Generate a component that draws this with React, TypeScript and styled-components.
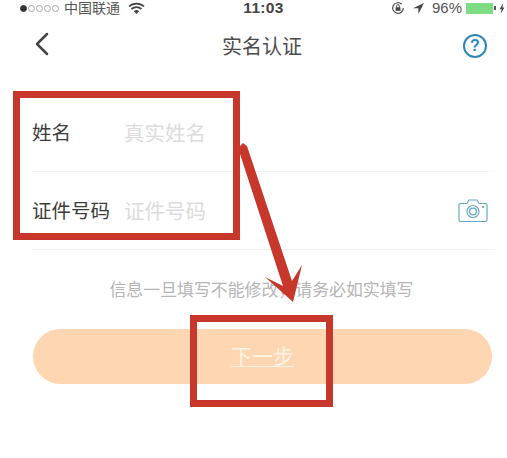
import styled, { createGlobalStyle } from "styled-components";
import { ChevronLeft } from "lucide-react";

const GlobalStyle = createGlobalStyle`
  html, body {
    margin: 0;
    padding: 0;
    background: #fff;
    font-family: "Liberation Sans", "Noto Sans CJK SC", sans-serif;
  }
`;

const Page = styled.div`
  position: relative;
  width: 507px;
  height: 458px;
  overflow: hidden;
  background: #fff;
`;

const StatusBar = styled.div`
  display: grid;
  grid-template-columns: 1fr auto 1fr;
  align-items: center;
  height: 16px;
  padding: 0 0 0 20px;
  color: #4a4a4a;
`;

const StatusLeft = styled.div`
  display: flex;
  align-items: center;
  gap: 1px;
`;

const StatusRight = styled.div`
  display: flex;
  align-items: center;
  justify-content: flex-end;
  padding-right: 2px;
`;

const Dot = styled.span<{ $on?: boolean }>`
  width: 7px;
  height: 7px;
  box-sizing: border-box;
  border-radius: 50%;
  border: 1px solid ${(p) => (p.$on ? "#333" : "#a5a5a5")};
  background: ${(p) => (p.$on ? "#333" : "transparent")};
`;

const Carrier = styled.span`
  margin: 0 7px 0 4px;
  font-size: 14px;
  line-height: 16px;
  color: #555;
`;

const Time = styled.span`
  font-size: 15.5px;
  font-weight: bold;
  line-height: 16px;
  letter-spacing: 0.3px;
  color: #444;
`;

const LocationIcon = styled.svg`
  width: 13px;
  height: 13px;
  margin-left: 7px;
`;

const Percent = styled.span`
  margin: 0 4px 0 7px;
  font-size: 15px;
  line-height: 16px;
  color: #555;
`;

const Battery = styled.span`
  display: block;
  width: 27px;
  height: 11px;
  background: #7ddc84;
`;

const BatteryTip = styled.span`
  display: block;
  width: 2px;
  height: 4px;
  margin: 0 3px 0 1px;
  background: #555;
`;

const NavBar = styled.div`
  display: grid;
  grid-template-columns: 1fr auto 1fr;
  align-items: center;
  height: 60px;
  padding: 0 20px 0 37px;
`;

const BackIcon = styled(ChevronLeft)`
  margin: -4px 0 0 -15px;
  color: #444;
`;

const Title = styled.h1`
  margin: -2px 0 0;
  font-size: 20px;
  font-weight: 400;
  color: #4b4b4b;
`;

const HelpIcon = styled.span`
  justify-self: end;
  display: flex;
  align-items: center;
  justify-content: center;
  width: 20px;
  height: 20px;
  border: 2px solid #2f86b8;
  border-radius: 50%;
  font-size: 16px;
  font-weight: bold;
  color: #2f86b8;
`;

const Form = styled.div`
  margin: 18px 12px 0 32px;
`;

const Row = styled.div`
  display: flex;
  align-items: center;
  box-sizing: content-box;
  height: 75px;
  padding-bottom: 2px;
  border-bottom: 1px solid #f3f3f3;
`;

const Label = styled.span`
  width: 92px;
  font-size: 19.5px;
  color: #3c3c3c;
`;

const Placeholder = styled.span`
  flex: 1;
  font-size: 20.5px;
  color: #dcdcdc;
`;

const CameraIcon = styled.svg`
  width: 30px;
  height: 26px;
  margin-right: 7px;
`;

const Note = styled.p`
  margin: 30px 0 0;
  padding-left: 16px;
  text-align: center;
  font-size: 16.9px;
  line-height: 22px;
  color: #b5b5b5;
`;

const NextButton = styled.button`
  display: block;
  width: 459px;
  height: 55px;
  margin: 27px 0 0 33px;
  padding: 0 0 4px;
  border: 0;
  border-radius: 28px;
  background: #fed6b1;
  color: #fff3e4;
  font-family: inherit;
  font-size: 21px;
  text-decoration: underline;
  text-underline-offset: 2px;
  text-decoration-thickness: 1px;
`;

const RedBox = styled.div<{ $x: number; $y: number; $w: number; $h: number }>`
  position: absolute;
  left: ${(p) => p.$x}px;
  top: ${(p) => p.$y}px;
  width: ${(p) => p.$w}px;
  height: ${(p) => p.$h}px;
  box-sizing: border-box;
  border: 7px solid #c7372b;
`;

const ArrowLayer = styled.svg`
  position: absolute;
  left: 0;
  top: 0;
  width: 507px;
  height: 458px;
`;

const App = () => {
  return (
    <Page>
      <GlobalStyle />
      <StatusBar>
        <StatusLeft>
          <Dot $on />
          <Dot />
          <Dot />
          <Dot />
          <Dot />
          <Carrier>中国联通</Carrier>
          <svg width="17" height="13" viewBox="0 0 17 13">
            <path d="M1 4.5a11 11 0 0 1 15 0M3.5 7a7.4 7.4 0 0 1 10 0" fill="none" stroke="#444" strokeWidth="1.7" />
            <path d="M5.8 9.2a4 4 0 0 1 5.4 0L8.5 12z" fill="#444" />
          </svg>
        </StatusLeft>
        <Time>11:03</Time>
        <StatusRight>
          <svg width="14" height="14" viewBox="0 0 14 14">
            <path d="M12.3 7a5.3 5.3 0 1 1-1.6-3.8" fill="none" stroke="#555" strokeWidth="1.2" />
            <rect x="4.6" y="6.2" width="4.8" height="3.6" fill="#444" />
            <path d="M5.6 6.2V5a1.4 1.4 0 0 1 2.8 0v1.2" fill="none" stroke="#444" strokeWidth="0.9" />
          </svg>
          <LocationIcon viewBox="0 0 13 13">
            <path d="M12 1 1 6.3h5.4V12z" fill="#444" />
          </LocationIcon>
          <Percent>96%</Percent>
          <Battery />
          <BatteryTip />
          <svg width="6" height="11" viewBox="0 0 6 11">
            <path d="M4.2 0 .6 6.2h2L1.6 11l3.8-6.4h-2z" fill="#444" />
          </svg>
        </StatusRight>
      </StatusBar>
      <NavBar>
        <BackIcon size={40} strokeWidth={1.5} />
        <Title>实名认证</Title>
        <HelpIcon>?</HelpIcon>
      </NavBar>
      <Form>
        <Row>
          <Label>姓名</Label>
          <Placeholder>真实姓名</Placeholder>
        </Row>
        <Row>
          <Label>证件号码</Label>
          <Placeholder>证件号码</Placeholder>
          <CameraIcon viewBox="0 0 30 26">
            <path
              d="M2.5 6.5H9l2-3.5h8l2 3.5h6.5a1.5 1.5 0 0 1 1.5 1.5v15a1.5 1.5 0 0 1-1.5 1.5h-25A1.5 1.5 0 0 1 1 23V8a1.5 1.5 0 0 1 1.5-1.5z"
              fill="none"
              stroke="#68a9c2"
              strokeWidth="1.2"
            />
            <circle cx="15" cy="14.5" r="6" fill="none" stroke="#68a9c2" strokeWidth="1.2" />
            <circle cx="15" cy="14.5" r="3.4" fill="none" stroke="#68a9c2" strokeWidth="1.4" />
            <circle cx="25" cy="10" r="1" fill="#4f8ca8" />
          </CameraIcon>
        </Row>
      </Form>
      <Note>信息一旦填写不能修改，请务必如实填写</Note>
      <NextButton>下一步</NextButton>
      <RedBox $x={13} $y={91} $w={227} $h={149} />
      <RedBox $x={190} $y={315} $w={143} $h={92} />
      <ArrowLayer viewBox="0 0 507 458">
        <path d="M240 146 L243 143 L247 146 L292 281 L302 265 L293 302 L265 277 L283 286 L240 154 Z" fill="#c7372b" />
      </ArrowLayer>
    </Page>
  );
};

export default App;
